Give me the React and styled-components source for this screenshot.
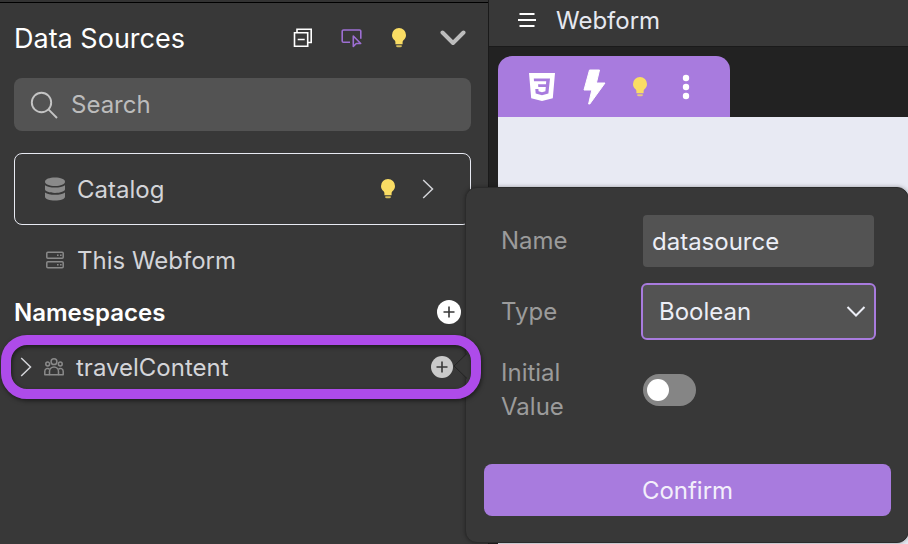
import React from "react";
import styled, { createGlobalStyle } from "styled-components";

const color = {
  panel: "#383838",
  field: "#535353",
  frame: "#222222",
  line: "#1a1a1a",
  accent: "#a87bde",
  ring: "#ae4bea",
  canvas: "#e8eaf3",
  bulb: "#fadd64",
  text: "#d3d4d8",
  muted: "#9b9b9b",
};

const GlobalStyle = createGlobalStyle`
  *, *::before, *::after { box-sizing: border-box; }
  body {
    margin: 0;
    background: ${color.frame};
    color: ${color.text};
    font-family: Inter, "Open Sans", sans-serif;
    font-size: 24px;
    font-weight: 400;
  }
  button, input, select { font: inherit; color: inherit; }
  svg { display: block; flex: none; }
`;

const Page = styled.div`
  position: relative;
  display: grid;
  grid-template-columns: 489px minmax(0, 1fr);
  min-height: 100vh;
  overflow: hidden;
`;

const Sidebar = styled.aside`
  display: flex;
  flex-direction: column;
  padding: 0 17px 0 14px;
  background: linear-gradient(#333333 2px, #000000 2px, #000000 3px, ${color.panel} 3px);
  border-right: 1px solid ${color.line};
`;

const SidebarHeader = styled.header`
  display: flex;
  align-items: center;
  justify-content: space-between;
  height: 78px;
  padding: 0 5px 2px 0;
`;

const Title = styled.h1`
  margin: 0;
  color: #ffffff;
  font-size: 27px;
  font-weight: 400;
`;

const ToolGroup = styled.div`
  display: flex;
  align-items: center;
  gap: ${(p) => p.$gap}px;
`;

const IconButton = styled.button`
  display: grid;
  place-items: center;
  flex: none;
  width: ${(p) => (p.$width ? `${p.$width}px` : "auto")};
  padding: 0;
  border: 0;
  background: none;
  color: ${(p) => p.$color || "#ffffff"};
  cursor: pointer;
`;

const SearchBox = styled.label`
  display: flex;
  align-items: center;
  gap: 13px;
  height: 53px;
  padding: 0 16px;
  border-radius: 8px;
  background: ${color.field};
  color: #c4c4c4;
`;

const SearchInput = styled.input`
  flex: 1;
  min-width: 0;
  padding: 0;
  border: 0;
  outline: 0;
  background: none;
  &::placeholder { color: #bcbcbc; opacity: 1; }
`;

const SourceList = styled.nav`
  display: flex;
  flex-direction: column;
  margin-top: 22px;
`;

const SourceRow = styled.div`
  display: flex;
  align-items: center;
  justify-content: space-between;
  height: ${(p) => (p.$selected ? 72 : 70)}px;
  padding: 0 36px 0 29px;
  border: 1px solid ${(p) => (p.$selected ? "#e8eaf3" : "transparent")};
  border-radius: 8px;
`;

const SourceButton = styled.button`
  display: flex;
  align-items: center;
  gap: 11px;
  padding: 0;
  border: 0;
  background: none;
  cursor: pointer;
`;

const IconSlot = styled.span`
  display: flex;
  width: 22px;
  justify-content: center;
  color: #8a8a8a;
`;

const SectionHeader = styled.div`
  display: flex;
  align-items: center;
  justify-content: space-between;
  height: 34px;
  padding-right: 10px;
`;

const SectionTitle = styled.h2`
  margin: 0;
  color: #ffffff;
  font-size: 24px;
  font-weight: 600;
`;

const RoundButton = styled(IconButton)`
  width: ${(p) => p.$size}px;
  height: ${(p) => p.$size}px;
  border-radius: 50%;
  background: ${(p) => p.$fill};
  color: #383838;
`;

const NamespaceRow = styled.div`
  position: relative;
  display: flex;
  align-items: center;
  justify-content: space-between;
  height: 44px;
  margin-top: 16px;
  padding: 0 18px 0 6px;
`;

const HighlightRing = styled.span`
  position: absolute;
  z-index: 3;
  inset: -10px -10px -10px -13px;
  border: 10px solid ${color.ring};
  border-radius: 26px;
  box-shadow: 1px 2px 4px rgba(0, 0, 0, 0.5), inset 1px 2px 4px rgba(0, 0, 0, 0.5);
  pointer-events: none;
`;

const Workspace = styled.main`
  display: flex;
  flex-direction: column;
  min-width: 0;
`;

const WorkspaceHeader = styled.header`
  display: flex;
  align-items: center;
  gap: 20px;
  height: 47px;
  padding: 0 29px 6px;
  background: ${color.panel};
  border-bottom: 1px solid ${color.line};
  color: #e6e8f0;
`;

const WorkspaceTitle = styled.h2`
  margin: 0;
  font-size: 24px;
  font-weight: 400;
`;

const Stage = styled.section`
  display: flex;
  flex: 1;
  flex-direction: column;
  padding: 9px 0 0 9px;
`;

const FormToolbar = styled.div`
  display: flex;
  align-items: center;
  align-self: flex-start;
  gap: 22px;
  height: 61px;
  padding: 0 32px 0 26px;
  border-radius: 14px 14px 0 0;
  background: ${color.accent};
`;

const Canvas = styled.div`
  flex: 1;
  background: ${color.canvas};
`;

const Popover = styled.form`
  position: absolute;
  z-index: 2;
  top: 187px;
  right: -1px;
  left: 465px;
  display: flex;
  flex-direction: column;
  gap: 16px;
  padding: 27px 17px 26px 18px;
  border: 1px solid #2b2b2b;
  border-radius: 12px;
  background: ${color.panel};
  box-shadow: 0 0 4px rgba(0, 0, 0, 0.35);
`;

const Beak = styled.svg`
  position: absolute;
  top: 165px;
  left: -13px;
`;

const Field = styled.div`
  display: grid;
  grid-template-columns: 140px minmax(0, 1fr);
  align-items: center;
  padding: 0 15px 0 17px;
`;

const FieldLabel = styled.label`
  color: ${color.muted};
  line-height: 34px;
`;

const TextInput = styled.input`
  height: 52px;
  min-width: 0;
  margin: 0 2px;
  padding: 0 9px;
  border: 0;
  border-radius: 4px;
  outline: 0;
  background: ${color.field};
  color: #eceef6;
`;

const SelectBox = styled.div`
  display: grid;
  align-items: center;
  color: #eceef6;
  & > * { grid-area: 1 / 1; }
  & > svg { justify-self: end; margin-right: 10px; pointer-events: none; }
`;

const Select = styled.select`
  width: 100%;
  height: 57px;
  padding: 0 40px 0 16px;
  appearance: none;
  border: 2px solid ${color.accent};
  border-radius: 6px;
  outline: 0;
  background: ${color.field};
`;

const Toggle = styled.input`
  width: 53px;
  height: 32px;
  margin: 0 2px;
  padding: 5px 4px;
  appearance: none;
  border-radius: 16px;
  background: #858585;
  cursor: pointer;
  &::before {
    content: "";
    display: block;
    width: 22px;
    height: 22px;
    border-radius: 50%;
    background: #ffffff;
  }
  &:checked { background: ${color.accent}; }
  &:checked::before { margin-left: auto; }
`;

const ConfirmButton = styled.button`
  height: 52px;
  margin-top: 24px;
  border: 0;
  border-radius: 8px;
  background: ${color.accent};
  color: #f3effb;
  cursor: pointer;
`;

const Bulb = () => (
  <svg width="16" height="20" viewBox="0 0 16 20" fill={color.bulb}>
    <path d="M8 0a7 7 0 0 1 7 7c0 2.400-1 3.800-2.600 5.200-.6.600-.8 1.200-.8 2.100v1.900H4.400v-1.900c0-.9-.2-1.500-.8-2.100C2 10.800 1 9.400 1 7a7 7 0 0 1 7-7Z" />
    <path d="M5.300 17.200h5.400v1l-1 1H6.300l-1-1Z" opacity=".8" />
  </svg>
);

const CollapseAll = () => (
  <svg width="20" height="20" viewBox="0 0 20 20" fill="none" stroke="currentColor" strokeWidth="1.600">
    <path d="M4 4.500V1.300h14.200v13.200H15" />
    <path d="M1.500 4.800h13.200v13.400H1.500ZM4.700 11.500h7" />
  </svg>
);

const PickElement = () => (
  <svg width="22" height="20" viewBox="0 0 22 20" fill="none" stroke="currentColor" strokeWidth="1.600" strokeLinejoin="round">
    <path d="M9 14.200H2.500a1.300 1.300 0 0 1-1.300-1.300V3.300A1.300 1.300 0 0 1 2.500 2h16a1.300 1.300 0 0 1 1.300 1.300v7.400" />
    <path d="M12.300 8v10.500l3-3h4.400Z" />
  </svg>
);

const ChevronDown = () => (
  <svg width="26" height="16" viewBox="0 0 26 16" fill="none" stroke="currentColor" strokeWidth="4" strokeLinecap="round" strokeLinejoin="round">
    <path d="M2.500 2.500 13 13 23.500 2.500" />
  </svg>
);

const ThinChevronDown = () => (
  <svg width="20" height="12" viewBox="0 0 20 12" fill="none" stroke="currentColor" strokeWidth="2">
    <path d="M1.500 1 10 9.500 18.500 1" />
  </svg>
);

const ThinChevronRight = () => (
  <svg width="12" height="20" viewBox="0 0 12 20" fill="none" stroke="currentColor" strokeWidth="1.500">
    <path d="M1.200 1 10.500 10 1.200 19" />
  </svg>
);

const SearchIcon = () => (
  <svg width="28" height="28" viewBox="0 0 28 28" fill="none" stroke="currentColor" strokeWidth="1.900">
    <circle cx="11.500" cy="11.500" r="9.700" />
    <path d="M18.200 18.200 27 27" />
  </svg>
);

const Database = () => (
  <svg width="20" height="24" viewBox="0 0 20 24" fill="currentColor">
    <path d="M10 .5c5.600 0 10 1.700 10 4.200S15.600 9 10 9 0 7.300 0 4.700 4.400.5 10 .5Z" />
    <path d="M0 8.300c2 1.500 5.800 2.300 10 2.300s8-.8 10-2.300v3.900c0 2-4.400 3.700-10 3.700S0 14.200 0 12.200Z" />
    <path d="M0 15.500c2 1.500 5.800 2.300 10 2.300s8-.8 10-2.300v4.200c0 2.200-4.400 3.800-10 3.800S0 21.900 0 19.700Z" />
  </svg>
);

const Server = () => (
  <svg width="18" height="18" viewBox="0 0 18 18" fill="none" stroke="currentColor" strokeWidth="1.500">
    <rect x=".8" y="1.200" width="16.400" height="6" rx="1" />
    <rect x=".8" y="10.800" width="16.400" height="6" rx="1" />
    <path d="M11 4.200h1.600M14 4.200h1.600M11 13.800h1.600M14 13.800h1.600" />
  </svg>
);

const People = () => (
  <svg width="20" height="18" viewBox="0 0 20 18" fill="none" stroke="currentColor" strokeWidth="1.500" strokeLinejoin="round">
    <circle cx="10" cy="3.700" r="2.900" />
    <circle cx="3.700" cy="6" r="1.900" />
    <circle cx="16.300" cy="6" r="1.900" />
    <path d="M5.500 16.800v-3.300a4.500 4.500 0 0 1 9 0v3.300Z" />
    <path d="M5.500 16.800H.8v-3.600a2.800 2.800 0 0 1 4.700-2M14.500 16.800h4.700v-3.600a2.800 2.800 0 0 0-4.700-2" />
  </svg>
);

const Plus = () => (
  <svg width="12" height="12" viewBox="0 0 12 12" stroke="currentColor" strokeWidth="1.600">
    <path d="M6 .5v11M.5 6h11" />
  </svg>
);

const Menu = () => (
  <svg width="18" height="16" viewBox="0 0 18 16" stroke="currentColor" strokeWidth="1.800">
    <path d="M1.500 2h15M0 8h18M1.500 14h15" />
  </svg>
);

const StyleSheetLogo = () => (
  <svg width="26" height="28" viewBox="0 0 26 28" fill="#ffffff" fillRule="evenodd">
    <path d="M0 0h26l-2.200 25.200L13 28 2.200 25.200ZM4.800 5.500l.2 2.800h12.200l-.2 2.900H9.100l.2 2.800h7.500l-.4 4.300-3.400 1-3.400-1-.2-2.200H6.300l.4 4.300L13 22.300l6.400-1.900L21 5.500Z" />
  </svg>
);

const Bolt = () => (
  <svg width="23" height="36" viewBox="0 0 23 36" fill="#ffffff" stroke="#ffffff" strokeLinejoin="round">
    <path d="M6.500 1h10L13.400 14H22L6.800 35H5.600L8.800 21H1Z" />
  </svg>
);

const MoreDots = () => (
  <svg width="8" height="26" viewBox="0 0 8 26" fill="#ffffff">
    <circle cx="4" cy="4" r="3.200" />
    <circle cx="4" cy="13" r="3.200" />
    <circle cx="4" cy="22" r="3.200" />
  </svg>
);

export default function App() {
  return (
    <>
      <GlobalStyle />
      <Page>
        <Sidebar>
          <SidebarHeader>
            <Title>Data Sources</Title>
            <ToolGroup $gap={33}>
              <ToolGroup $gap={28}>
                <IconButton type="button" aria-label="Collapse all"><CollapseAll /></IconButton>
                <IconButton type="button" aria-label="Pick element" $color="#9d6fd3"><PickElement /></IconButton>
                <IconButton type="button" aria-label="Tips"><Bulb /></IconButton>
              </ToolGroup>
              <IconButton type="button" aria-label="Collapse panel" $color="#bcbcbc"><ChevronDown /></IconButton>
            </ToolGroup>
          </SidebarHeader>
          <SearchBox>
            <SearchIcon />
            <SearchInput type="text" placeholder="Search" aria-label="Search" />
          </SearchBox>
          <SourceList aria-label="Sources">
            <SourceRow $selected>
              <SourceButton type="button">
                <IconSlot><Database /></IconSlot>
                Catalog
              </SourceButton>
              <ToolGroup $gap={26}>
                <IconButton type="button" aria-label="Catalog tips"><Bulb /></IconButton>
                <IconButton type="button" aria-label="Open catalog" $color={color.text}><ThinChevronRight /></IconButton>
              </ToolGroup>
            </SourceRow>
            <SourceRow>
              <SourceButton type="button">
                <IconSlot><Server /></IconSlot>
                This Webform
              </SourceButton>
            </SourceRow>
          </SourceList>
          <SectionHeader>
            <SectionTitle>Namespaces</SectionTitle>
            <RoundButton type="button" aria-label="Add namespace" $size={24} $fill="#ffffff"><Plus /></RoundButton>
          </SectionHeader>
          <NamespaceRow>
            <SourceButton type="button">
              <ThinChevronRight />
              <IconSlot><People /></IconSlot>
              travelContent
            </SourceButton>
            <RoundButton type="button" aria-label="Add data source" $size={22} $fill="#cacaca"><Plus /></RoundButton>
            <HighlightRing />
          </NamespaceRow>
        </Sidebar>
        <Workspace>
          <WorkspaceHeader>
            <IconButton type="button" aria-label="Menu"><Menu /></IconButton>
            <WorkspaceTitle>Webform</WorkspaceTitle>
          </WorkspaceHeader>
          <Stage>
            <FormToolbar>
              <IconButton type="button" aria-label="Styles" $width={36}><StyleSheetLogo /></IconButton>
              <IconButton type="button" aria-label="Events" $width={24}><Bolt /></IconButton>
              <IconButton type="button" aria-label="Form tips" $width={24}><Bulb /></IconButton>
              <IconButton type="button" aria-label="More" $width={24}><MoreDots /></IconButton>
            </FormToolbar>
            <Canvas />
          </Stage>
        </Workspace>
        <Popover onSubmit={(e) => e.preventDefault()}>
          <Beak width="15" height="26" viewBox="0 0 15 26" fill={color.panel} stroke="#242424">
            <path d="M14 .5 1 13l13 12.500" />
          </Beak>
          <Field>
            <FieldLabel htmlFor="source-name">Name</FieldLabel>
            <TextInput id="source-name" type="text" defaultValue="datasource" />
          </Field>
          <Field>
            <FieldLabel htmlFor="source-type">Type</FieldLabel>
            <SelectBox>
              <Select id="source-type" defaultValue="Boolean">
                <option>Boolean</option>
              </Select>
              <ThinChevronDown />
            </SelectBox>
          </Field>
          <Field>
            <FieldLabel htmlFor="source-initial">Initial<br />Value</FieldLabel>
            <Toggle id="source-initial" type="checkbox" />
          </Field>
          <ConfirmButton type="submit">Confirm</ConfirmButton>
        </Popover>
      </Page>
    </>
  );
}
